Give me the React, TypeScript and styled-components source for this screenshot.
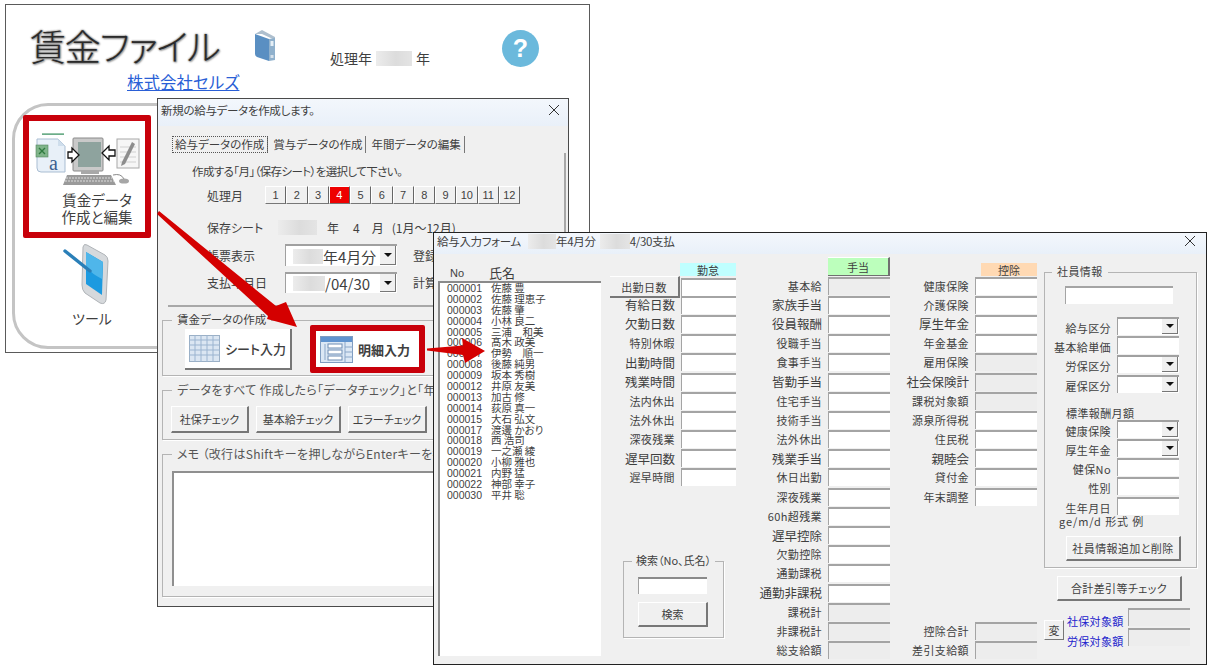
import styled, { createGlobalStyle } from "styled-components";

interface FieldRow {
  label: string;
  big?: boolean;
  readOnly?: boolean;
}

const JP_FONT = `"Noto Sans CJK JP", "Liberation Sans", sans-serif`;

const months = ["1", "2", "3", "4", "5", "6", "7", "8", "9", "10", "11", "12"];

const employees = [
  ["000001", "佐藤 豊"],
  ["000002", "佐藤 理恵子"],
  ["000003", "佐藤 肇"],
  ["000004", "小林 良二"],
  ["000005", "三浦　和美"],
  ["000006", "髙木 政美"],
  ["000007", "伊勢　順一"],
  ["000008", "後藤 純男"],
  ["000009", "坂本 秀樹"],
  ["000012", "井原 友美"],
  ["000013", "加古 修"],
  ["000014", "荻原 真一"],
  ["000015", "大石 弘文"],
  ["000017", "渡邊 かおり"],
  ["000018", "西 浩司"],
  ["000019", "一之瀬 綾"],
  ["000020", "小柳 雅也"],
  ["000021", "内野 猛"],
  ["000022", "神部 幸子"],
  ["000030", "平井 聡"],
];

const attendanceRows: FieldRow[] = [
  { label: "有給日数", big: true },
  { label: "欠勤日数", big: true },
  { label: "特別休暇" },
  { label: "出勤時間", big: true },
  { label: "残業時間", big: true },
  { label: "法内休出" },
  { label: "法外休出" },
  { label: "深夜残業" },
  { label: "遅早回数", big: true },
  { label: "遅早時間" },
];

const allowanceRows: FieldRow[] = [
  { label: "基本給", readOnly: true },
  { label: "家族手当", big: true },
  { label: "役員報酬", big: true },
  { label: "役職手当" },
  { label: "食事手当" },
  { label: "皆勤手当", big: true },
  { label: "住宅手当" },
  { label: "技術手当" },
  { label: "法外休出" },
  { label: "残業手当", big: true },
  { label: "休日出勤" },
  { label: "深夜残業" },
  { label: "60h超残業" },
  { label: "遅早控除", big: true },
  { label: "欠勤控除" },
  { label: "通勤課税" },
  { label: "通勤非課税", big: true },
  { label: "課税計", readOnly: true },
  { label: "非課税計", readOnly: true },
  { label: "総支給額", readOnly: true },
];

const deductionRows: FieldRow[] = [
  { label: "健康保険" },
  { label: "介護保険" },
  { label: "厚生年金", big: true },
  { label: "年金基金" },
  { label: "雇用保険", readOnly: true },
  { label: "社会保険計", big: true, readOnly: true },
  { label: "課税対象額", readOnly: true },
  { label: "源泉所得税" },
  { label: "住民税" },
  { label: "親睦会", big: true },
  { label: "貸付金" },
  { label: "年末調整" },
];

const deductionTotals: FieldRow[] = [
  { label: "控除合計", readOnly: true },
  { label: "差引支給額", readOnly: true },
];

const GlobalStyle = createGlobalStyle`
  html, body {
    margin: 0;
    background: #ffffff;
  }

  body {
    font-family: ${JP_FONT};
    font-feature-settings: "palt";
    color: #3f3f3f;
  }
`;

const Desktop = styled.div`
  position: relative;
  width: 1211px;
  height: 672px;
  overflow: hidden;
`;

const MainWindow = styled.section`
  position: absolute;
  left: 5px;
  top: 4px;
  width: 585px;
  height: 349px;
  box-sizing: border-box;
  background: #ffffff;
  border: 1px solid #5a5a5a;
`;

const MainHeader = styled.header`
  display: flex;
  align-items: flex-start;
  padding: 16px 0 0 24px;
  height: 51px;
`;

const AppTitle = styled.h1`
  margin: 0;
  width: 224px;
  font-size: 36px;
  line-height: 48px;
  font-weight: 300;
  letter-spacing: -1.2px;
  color: #2a2a2a;
  text-shadow: 0 0 2px #8a8a8a, 0 0 2px #8a8a8a, 1px 1px 2px #9a9a9a;
`;

const BookMark = styled.div`
  flex: none;
  margin-top: 9px;
`;

const YearLabel = styled.div`
  display: flex;
  align-items: center;
  gap: 4px;
  margin: 27px 0 0 54px;
  width: 172px;
  font-size: 14px;
  line-height: 20px;
  height: 20px;
`;

const HelpBadge = styled.div`
  display: flex;
  align-items: center;
  justify-content: center;
  width: 37px;
  height: 37px;
  margin-top: 9px;
  border-radius: 50%;
  background: #6bb9dc;
  color: #ffffff;
  font: 700 25px "Liberation Sans", sans-serif;
`;

const CompanyLink = styled.a`
  display: block;
  width: 114px;
  margin: 0 0 0 121px;
  height: 31px;
  font-size: 16.5px;
  line-height: 20px;
  white-space: nowrap;
  color: #2a5fd6;
  text-decoration: underline;
`;

const MenuPanel = styled.div`
  width: 300px;
  height: 246px;
  margin-left: 6px;
  box-sizing: border-box;
  border: 3px solid #c4c4c4;
  border-radius: 36px;
  padding: 9px 0 0 8px;
`;

const MenuHighlight = styled.div`
  display: flex;
  flex-direction: column;
  align-items: center;
  box-sizing: border-box;
  width: 128px;
  height: 123px;
  border: 6px solid #c8000a;
  border-radius: 2px;
  padding-top: 5px;
  font-size: 14.5px;
  line-height: 17px;
  text-align: center;
`;

const MenuCaption = styled.span`
  margin: 3px 0 0 20px;
`;

const MenuTool = styled.div`
  display: flex;
  flex-direction: column;
  align-items: center;
  width: 128px;
  margin-top: 5px;
  font-size: 14px;
  line-height: 18px;
  gap: 4px;
`;

const MenuToolCaption = styled.span`
  margin-left: 10px;
`;

const Redacted = styled.span<{ $width: number; $left?: number }>`
  display: inline-block;
  flex: none;
  width: ${(p) => p.$width}px;
  height: 15px;
  margin-left: ${(p) => p.$left ?? 0}px;
  background: linear-gradient(90deg, #ececec, #dcdcdc 55%, #e4e4e4);
`;

const SetupDialog = styled.section`
  position: absolute;
  left: 157px;
  top: 98px;
  width: 412px;
  height: 509px;
  box-sizing: border-box;
  background: #f0f0f0;
  border: 1px solid #4a4a4a;
  font-size: 12px;
`;

const TitleBar = styled.div<{ $height: number; $closeGap: number }>`
  display: flex;
  align-items: center;
  height: ${(p) => p.$height}px;
  box-sizing: border-box;
  padding: 0 ${(p) => p.$closeGap}px 5px 3px;
  background: linear-gradient(#f3f7fc, #e9f0f9);
  white-space: nowrap;
  font-size: 11.5px;
  letter-spacing: -0.3px;
`;

const CloseGlyph = styled.svg`
  margin-left: auto;
  flex: none;
`;

const TabStrip = styled.div`
  display: flex;
  margin: 10px 0 0 14px;
  height: 17px;
  font-size: 11.5px;
  line-height: 16px;
`;

const Tab = styled.div<{ $active?: boolean }>`
  padding: 0 3px 0 3px;
  margin-right: 2px;
  box-sizing: border-box;
  border-right: 1px solid #777777;
  white-space: nowrap;
  outline: ${(p) => (p.$active ? "1px dotted #555555" : "none")};
  outline-offset: -1px;
`;

const TabPanel = styled.div`
  width: 398px;
  height: 154px;
  margin-left: 10px;
  box-sizing: border-box;
  border-right: 2px solid #a8a8a8;
  border-bottom: 2px solid #a8a8a8;
  padding: 10px 0 0 24px;
`;

const PanelNote = styled.div`
  font-size: 11.5px;
  letter-spacing: -0.6px;
  line-height: 16px;
  white-space: nowrap;
`;

const PanelRow = styled.div<{ $gapTop: number }>`
  display: flex;
  align-items: center;
  margin: ${(p) => p.$gapTop}px 0 0 15px;
  white-space: nowrap;
`;

const RowLabel = styled.span`
  flex: none;
  width: 78px;
`;

const MonthButtons = styled.div`
  display: flex;
  margin-left: -20px;
`;

const MonthButton = styled.div<{ $selected?: boolean }>`
  width: 21.25px;
  height: 18px;
  box-sizing: border-box;
  border-top: 1px solid #ffffff;
  border-left: 1px solid #ffffff;
  border-right: 1px solid #666666;
  border-bottom: 1px solid #777777;
  background: ${(p) => (p.$selected ? "#ee0000" : "#f0f0f0")};
  color: ${(p) => (p.$selected ? "#ffffff" : "#3f3f3f")};
  font: 11px/16px "Liberation Sans", sans-serif;
  text-align: center;
`;

const SheetValue = styled.span<{ $left: number }>`
  margin-left: ${(p) => p.$left}px;
`;

const ComboBox = styled.div<{ $width: number; $height: number }>`
  display: flex;
  align-items: center;
  flex: none;
  width: ${(p) => p.$width}px;
  height: ${(p) => p.$height}px;
  box-sizing: border-box;
  background: #ffffff;
  border-top: 2px solid #a0a0a0;
  border-left: 1px solid #a0a0a0;
  font-size: 15px;
`;

const ComboText = styled.span`
  display: flex;
  align-items: center;
  flex: 1;
  min-width: 0;
  padding-left: 7px;
`;

const ComboArrow = styled.span`
  display: flex;
  align-items: center;
  justify-content: center;
  flex: none;
  align-self: stretch;
  width: 16px;
  margin: 0 1px 1px 0;
  box-sizing: border-box;
  background: #f0f0f0;
  border-right: 1px solid #777777;
  border-bottom: 1px solid #777777;

  &::before {
    content: "";
    border-left: 4px solid transparent;
    border-right: 4px solid transparent;
    border-top: 4px solid #111111;
  }
`;

const CutOffLabel = styled.span`
  margin-left: 16px;
`;

const Group = styled.fieldset`
  margin: 0;
  padding: 0;
  min-width: 0;
  box-sizing: border-box;
  border: 1px solid #b4b4b4;
  box-shadow: 1px 1px 0 #ffffff;
`;

const GroupTitle = styled.legend`
  margin-left: 9px;
  padding: 0 5px;
  height: 14px;
  font-size: 11.5px;
  line-height: 13px;
  white-space: nowrap;
`;

const WideGroupTitle = styled(GroupTitle)`
  font-size: 12px;
  letter-spacing: 0.3px;
  color: #555555;
`;

const DialogGroup = styled(Group)<{ $top: number; $height: number }>`
  display: block;
  width: 402px;
  height: ${(p) => p.$height}px;
  margin: ${(p) => p.$top}px 0 0 4px;
`;

const EntryButtons = styled.div`
  display: flex;
  align-items: center;
  margin-top: -2px;
  padding-left: 22px;
  gap: 18px;
`;

const EntryButton = styled.div`
  display: flex;
  align-items: center;
  justify-content: center;
  gap: 5px;
  width: 107px;
  height: 41px;
  box-sizing: border-box;
  background: #ffffff;
  border-right: 2px solid #777777;
  border-bottom: 2px solid #777777;
  font-size: 13px;
  font-weight: 500;
  white-space: nowrap;
`;

const EntryFrame = styled.div`
  display: flex;
  align-items: center;
  gap: 5px;
  width: 115px;
  height: 48px;
  padding-left: 4px;
  box-sizing: border-box;
  background: #ffffff;
  border: 6px solid #c8000a;
  border-radius: 2px;
  font-size: 13px;
  font-weight: 700;
  white-space: nowrap;
`;

const CheckButtons = styled.div`
  display: flex;
  gap: 7px;
  padding: 9px 0 0 8px;
`;

const CheckButton = styled.div<{ $width: number }>`
  display: flex;
  align-items: center;
  justify-content: center;
  width: ${(p) => p.$width}px;
  height: 27px;
  box-sizing: border-box;
  border-top: 1px solid #ffffff;
  border-left: 1px solid #ffffff;
  border-right: 2px solid #777777;
  border-bottom: 2px solid #777777;
  font-size: 11px;
  white-space: nowrap;
`;

const MemoArea = styled.div`
  width: 300px;
  height: 115px;
  margin: 10px 0 0 9px;
  box-sizing: border-box;
  background: #ffffff;
  border-top: 2px solid #8f8f8f;
  border-left: 2px solid #8f8f8f;
`;

const FormWindow = styled.section`
  position: absolute;
  left: 433px;
  top: 232px;
  width: 774px;
  height: 433px;
  box-sizing: border-box;
  background: #f0f0f0;
  border: 1px solid #222222;
  font-size: 11px;
`;

const FormBody = styled.div`
  display: flex;
  align-items: flex-start;
`;

const ListColumn = styled.div`
  flex: none;
  width: 176px;
  padding-left: 4px;
  box-sizing: border-box;
`;

const ListHeading = styled.div`
  display: flex;
  align-items: flex-end;
  height: 27px;
  padding-left: 12px;
  font-size: 13px;
  line-height: 16px;
`;

const ListNoHeading = styled.span`
  width: 39px;
  font: 11px/15px "Liberation Sans", sans-serif;
`;

const ListBox = styled.div`
  width: 163px;
  height: 375px;
  box-sizing: border-box;
  background: #ffffff;
  border-top: 2px solid #8a8a8a;
  border-left: 2px solid #8a8a8a;
  padding: 0 0 0 7px;
`;

const ListRow = styled.div`
  display: flex;
  height: 10.9px;
  line-height: 10.9px;
  font-size: 10.5px;
  white-space: nowrap;
`;

const ListNumber = styled.span`
  width: 44px;
  font: 10.5px/10.9px "Liberation Sans", sans-serif;
`;

const FieldColumn = styled.div<{ $width: number; $gapLeft?: number }>`
  flex: none;
  display: flex;
  flex-direction: column;
  width: ${(p) => p.$width}px;
  margin-left: ${(p) => p.$gapLeft ?? 0}px;
`;

const ColumnHeading = styled.div`
  display: flex;
  align-items: flex-end;
  justify-content: flex-end;
  height: 22px;
`;

const ColumnTag = styled.div<{ $color: string }>`
  display: flex;
  align-items: center;
  justify-content: center;
  width: 56px;
  height: 13px;
  background: ${(p) => p.$color};
  font-size: 11px;
`;

const ColumnRaisedTag = styled.div`
  display: flex;
  align-items: center;
  justify-content: center;
  width: 62px;
  height: 19px;
  box-sizing: border-box;
  background: #bcffbc;
  border-right: 2px solid #707070;
  border-bottom: 1px solid #707070;
  border-top: 1px solid #ffffff;
  font-size: 11px;
`;

const Row = styled.div<{ $inputWidth: number }>`
  display: grid;
  grid-template-columns: 1fr ${(p) => p.$inputWidth}px;
  column-gap: 6px;
  align-items: center;
  height: 19.2px;
`;

const RowText = styled.span<{ $big?: boolean }>`
  justify-self: end;
  white-space: nowrap;
  font-size: ${(p) => (p.$big ? "12.5px" : "11px")};
  letter-spacing: ${(p) => (p.$big ? "0" : "0.4px")};
`;

const FieldBox = styled.div<{ $readOnly?: boolean }>`
  height: 18px;
  box-sizing: border-box;
  background: ${(p) => (p.$readOnly ? "#ededed" : "#ffffff")};
  border-top: 2px solid #a4a4a4;
  border-left: 1px solid #a4a4a4;
`;

const RaisedLabel = styled.div`
  display: flex;
  align-items: center;
  justify-content: center;
  height: 22px;
  margin-right: 1px;
  box-sizing: border-box;
  border-right: 2px solid #777777;
  border-bottom: 2px solid #777777;
  border-top: 1px solid #ffffff;
  font-size: 11px;
  letter-spacing: 0.4px;
`;

const AttendanceButtonRow = styled(Row)`
  grid-template-columns: 1fr 55px;
  column-gap: 0;
  height: 19.2px;
`;

const SearchGroup = styled(Group)`
  width: 101px;
  height: 84px;
  margin: 67px 0 0 13px;
`;

const SearchTitle = styled(GroupTitle)`
  margin-left: 8px;
  padding: 0 4px;
  font-size: 11px;
`;

const SearchInput = styled.div`
  width: 69px;
  height: 17px;
  margin: 9px 0 0 14px;
  box-sizing: border-box;
  background: #ffffff;
  border-top: 2px solid #8a8a8a;
  border-left: 1px solid #a0a0a0;
`;

const SearchButton = styled.div`
  display: flex;
  align-items: center;
  justify-content: center;
  width: 70px;
  height: 25px;
  margin: 8px 0 0 14px;
  box-sizing: border-box;
  border-top: 1px solid #ffffff;
  border-left: 1px solid #ffffff;
  border-right: 2px solid #777777;
  border-bottom: 2px solid #777777;
`;

const SpacerRows = styled.div<{ $count: number }>`
  height: ${(p) => p.$count * 19.2}px;
`;

const InfoColumn = styled.div`
  flex: none;
  width: 153px;
  margin: 11px 0 0 7px;
`;

const InfoGroup = styled(Group)`
  height: 303px;
`;

const InfoTitle = styled(GroupTitle)`
  margin-left: 7px;
  font-size: 11px;
  letter-spacing: 0.4px;
`;

const InfoNameInput = styled(FieldBox)`
  width: 108px;
  margin: 7px 0 12px 20px;
`;

const InfoRow = styled.div`
  display: grid;
  grid-template-columns: 66px 62px;
  column-gap: 6px;
  align-items: center;
  height: 19.2px;
`;

const InfoRowText = styled(RowText)`
  padding-top: 4px;
`;

const InfoSubTitle = styled.div`
  margin: 12px 0 0 21px;
  height: 14px;
  font-size: 11px;
  line-height: 16px;
  letter-spacing: 0.4px;
  white-space: nowrap;
`;

const InfoHint = styled.div`
  margin: 0 0 0 14px;
  font-size: 11px;
  line-height: 13px;
  letter-spacing: 0.9px;
  white-space: nowrap;
`;

const InfoButton = styled.div`
  display: flex;
  align-items: center;
  justify-content: center;
  width: 115px;
  height: 25px;
  margin: 8px 0 0 21px;
  box-sizing: border-box;
  border-top: 1px solid #ffffff;
  border-left: 1px solid #ffffff;
  border-right: 2px solid #777777;
  border-bottom: 2px solid #777777;
  letter-spacing: 0.4px;
  white-space: nowrap;
`;

const TotalsButton = styled(InfoButton)`
  width: 125px;
  margin: 8px 0 0 13px;
`;

const TotalsRow = styled.div`
  display: flex;
  align-items: flex-start;
  margin: 7px 0 0 0;
`;

const SwapButton = styled.div`
  display: flex;
  align-items: center;
  justify-content: center;
  flex: none;
  width: 20px;
  height: 20px;
  margin: 12px 3px 0 0;
  box-sizing: border-box;
  border-right: 1px solid #777777;
  border-bottom: 1px solid #777777;
  border-top: 1px solid #ffffff;
  border-left: 1px solid #ffffff;
`;

const TotalsGrid = styled.div`
  display: grid;
  grid-template-columns: 61px 62px;
  row-gap: 2px;
  align-items: start;
`;

const TotalsLabel = styled.span`
  height: 18px;
  color: #2222cc;
  font-size: 11px;
  line-height: 26px;
  letter-spacing: 0.3px;
  white-space: nowrap;
`;

const ArrowLayer = styled.svg`
  position: absolute;
  inset: 0;
  pointer-events: none;
`;

const CloseIcon = () => (
  <CloseGlyph width="12" height="12" viewBox="0 0 12 12">
    <path d="M1 1 L11 11 M11 1 L1 11" stroke="#333" strokeWidth="1" fill="none" />
  </CloseGlyph>
);

const BookIcon = () => (
  <svg width="22" height="31" viewBox="0 0 22 31">
    <path d="M1 4 L8 0 L21 7 L21 10 L8 4 Z" fill="#aebfce" />
    <path d="M1 4 L15 9 L15 31 L3 27 Q1 26 1 24 Z" fill="#5a8fc2" />
    <path d="M15 9 L21 8 L21 30 L15 31 Z" fill="#8fb0cc" />
    <rect x="16.5" y="11" width="3" height="5" fill="#e6eff6" />
    <rect x="16.5" y="25" width="3" height="3" fill="#d5e0ea" />
  </svg>
);

const ComputerIcon = () => (
  <svg width="116" height="62" viewBox="0 0 116 62">
    <rect x="13" y="7.5" width="22" height="1.2" fill="#2e8b57" />
    <path d="M8 13 H29 L36 20 V46 H12 Q8 46 8 42 Z" fill="#e8f0f8" stroke="#a9bdd2" />
    <path d="M29 13 V20 H36 Z" fill="#cfdeec" />
    <rect x="7" y="19" width="12" height="12" fill="#7fb489" stroke="#55885f" strokeWidth="0.6" />
    <path d="M10 22 L16 28 M16 22 L10 28" stroke="#2f7a3f" strokeWidth="1.4" />
    <text x="20" y="44" fontFamily="Liberation Serif, serif" fontSize="20" fill="#3b5f8f">
      a
    </text>
    <rect x="44" y="12" width="30" height="33" rx="1" fill="#c9c9c9" stroke="#8a8a8a" />
    <rect x="49" y="16" width="23" height="25" fill="#8ea39e" />
    <rect x="52" y="45" width="18" height="3" fill="#a8a8a8" />
    <path d="M38 49 H82 L87 59 H34 Z" fill="#9a9a9a" />
    <path d="M37 52 H83 M36 55 H85" stroke="#dcdcdc" strokeWidth="1" strokeDasharray="2 1" />
    <path d="M84 49 Q92 47 95 53" stroke="#8a8a8a" fill="none" />
    <ellipse cx="95" cy="55" rx="5" ry="2.6" fill="#a6a6a6" />
    <path d="M39 26 H43 V22 L50 29 L43 36 V32 H39 Z" fill="#fff" stroke="#111" strokeWidth="1.3" />
    <path d="M86 24 H80 V20 L73 27 L80 34 V30 H86 Z" fill="#fff" stroke="#111" strokeWidth="1.3" />
    <rect x="88" y="13" width="22" height="29" fill="#f6f6f6" stroke="#a8a8a8" />
    <path d="M91 21 H107 M91 26 H107 M91 31 H107 M91 36 H107" stroke="#d0d0d0" />
    <path d="M93 36 L103 16 L106 18 L96 38 L92 40 Z" fill="#8d8d8d" />
  </svg>
);

const TabletIcon = () => (
  <svg width="48" height="62" viewBox="0 0 48 62">
    <path d="M24 2 Q21 0 20 4 L19 42 Q19 47 22 50 L37 60 Q42 62 43 57 L45 18 Q45 14 42 12 Z" fill="#d6d9dc" stroke="#b0b4b8" />
    <path d="M23 9 L40 19 L39 52 L23 41 Z" fill="#1c9ae0" />
    <path d="M23 9 L40 19 L39 36 Q29 31 23 24 Z" fill="#4fb6ea" />
    <path d="M2 8 L27 28" stroke="#2a7fb8" strokeWidth="3.4" strokeLinecap="round" />
  </svg>
);

const SheetIcon = () => (
  <svg width="31" height="27" viewBox="0 0 31 27">
    <rect x="0.5" y="0.5" width="30" height="26" fill="#dbe6f2" stroke="#9bb0c6" />
    <path d="M0 5 H31 M0 10 H31 M0 15 H31 M0 20 H31 M6 0 V27 M12 0 V27 M18 0 V27 M24 0 V27" stroke="#9bb4d0" />
  </svg>
);

const DetailIcon = () => (
  <svg width="33" height="27" viewBox="0 0 33 27">
    <rect x="0.5" y="0.5" width="32" height="26" fill="#dce8f5" stroke="#7f9cc0" />
    <rect x="1" y="1" width="31" height="5" fill="#5f93cf" />
    <rect x="8" y="8" width="14" height="4" fill="#fff" stroke="#6d8cb3" />
    <rect x="8" y="14" width="14" height="4" fill="#fff" stroke="#6d8cb3" />
    <rect x="8" y="20" width="14" height="4" fill="#fff" stroke="#6d8cb3" />
    <path d="M5 8 V24 M25 6 V27 M25 11 H33 M25 16 H33 M25 21 H33" stroke="#8aa6c8" />
  </svg>
);

const renderRows = (rows: FieldRow[], inputWidth: number) =>
  rows.map((row) => (
    <Row key={row.label} $inputWidth={inputWidth}>
      <RowText $big={row.big}>{row.label}</RowText>
      <FieldBox $readOnly={row.readOnly} />
    </Row>
  ));

const InfoCombo = ({ label }: { label: string }) => (
  <InfoRow>
    <InfoRowText>{label}</InfoRowText>
    <ComboBox $width={62} $height={18}>
      <ComboText />
      <ComboArrow />
    </ComboBox>
  </InfoRow>
);

const InfoField = ({ label }: { label: string }) => (
  <InfoRow>
    <InfoRowText>{label}</InfoRowText>
    <FieldBox />
  </InfoRow>
);

export default function App() {
  return (
    <Desktop>
      <GlobalStyle />

      <MainWindow>
        <MainHeader>
          <AppTitle>賃金ファイル</AppTitle>
          <BookMark>
            <BookIcon />
          </BookMark>
          <YearLabel>
            処理年 <Redacted $width={36} /> 年
          </YearLabel>
          <HelpBadge>?</HelpBadge>
        </MainHeader>
        <CompanyLink>株式会社セルズ</CompanyLink>
        <MenuPanel>
          <MenuHighlight>
            <ComputerIcon />
            <MenuCaption>
              賃金データ
              <br />
              作成と編集
            </MenuCaption>
          </MenuHighlight>
          <MenuTool>
            <TabletIcon />
            <MenuToolCaption>ツール</MenuToolCaption>
          </MenuTool>
        </MenuPanel>
      </MainWindow>

      <SetupDialog>
        <TitleBar $height={27} $closeGap={8}>
          新規の給与データを作成します。
          <CloseIcon />
        </TitleBar>
        <TabStrip>
          <Tab $active>給与データの作成</Tab>
          <Tab>賞与データの作成</Tab>
          <Tab>年間データの編集</Tab>
        </TabStrip>
        <TabPanel>
          <PanelNote>作成する「月」（保存シート）を選択して下さい。</PanelNote>
          <PanelRow $gapTop={7}>
            <RowLabel>処理月</RowLabel>
            <MonthButtons>
              {months.map((month) => (
                <MonthButton key={month} $selected={month === "4"}>
                  {month}
                </MonthButton>
              ))}
            </MonthButtons>
          </PanelRow>
          <PanelRow $gapTop={15}>
            <RowLabel>保存シート</RowLabel>
            <Redacted $width={39} $left={-7} />
            <SheetValue $left={10}>年</SheetValue>
            <SheetValue $left={14}>4</SheetValue>
            <SheetValue $left={12}>月</SheetValue>
            <SheetValue $left={8}>(1月～12月)</SheetValue>
          </PanelRow>
          <PanelRow $gapTop={8}>
            <RowLabel>帳票表示</RowLabel>
            <ComboBox $width={112} $height={22}>
              <ComboText>
                <Redacted $width={30} />
                年4月分
              </ComboText>
              <ComboArrow />
            </ComboBox>
            <CutOffLabel>登録</CutOffLabel>
          </PanelRow>
          <PanelRow $gapTop={6}>
            <RowLabel>支払年月日</RowLabel>
            <ComboBox $width={112} $height={21}>
              <ComboText>
                <Redacted $width={32} />
                /04/30
              </ComboText>
              <ComboArrow />
            </ComboBox>
            <CutOffLabel>計算</CutOffLabel>
          </PanelRow>
        </TabPanel>

        <DialogGroup $top={6} $height={63}>
          <GroupTitle>賃金データの作成</GroupTitle>
          <EntryButtons>
            <EntryButton>
              <SheetIcon />
              シート入力
            </EntryButton>
            <EntryFrame>
              <DetailIcon />
              明細入力
            </EntryFrame>
          </EntryButtons>
        </DialogGroup>

        <DialogGroup $top={7} $height={57}>
          <WideGroupTitle>データをすべて 作成したら「データチェック」と「年間データの更新」を実行</WideGroupTitle>
          <CheckButtons>
            <CheckButton $width={78}>社保チェック</CheckButton>
            <CheckButton $width={85}>基本給チェック</CheckButton>
            <CheckButton $width={79}>エラーチェック</CheckButton>
          </CheckButtons>
        </DialogGroup>

        <DialogGroup $top={7} $height={150}>
          <WideGroupTitle>メモ （改行はShiftキーを押しながらEnterキーを押下(ください)</WideGroupTitle>
          <MemoArea />
        </DialogGroup>
      </SetupDialog>

      <FormWindow>
        <TitleBar $height={21} $closeGap={10}>
          給与入力フォーム
          <Redacted $width={28} $left={7} />
          年4月分
          <Redacted $width={30} $left={4} />
          4/30支払
          <CloseIcon />
        </TitleBar>
        <FormBody>
          <ListColumn>
            <ListHeading>
              <ListNoHeading>No</ListNoHeading>
              氏名
            </ListHeading>
            <ListBox>
              {employees.map(([no, name]) => (
                <ListRow key={no}>
                  <ListNumber>{no}</ListNumber>
                  {name}
                </ListRow>
              ))}
            </ListBox>
          </ListColumn>

          <FieldColumn $width={126}>
            <ColumnHeading>
              <ColumnTag $color="#bfffff">勤怠</ColumnTag>
            </ColumnHeading>
            <AttendanceButtonRow $inputWidth={55}>
              <RaisedLabel>出勤日数</RaisedLabel>
              <FieldBox />
            </AttendanceButtonRow>
            {renderRows(attendanceRows, 55)}
            <SearchGroup>
              <SearchTitle>検索（No、氏名）</SearchTitle>
              <SearchInput />
              <SearchButton>検索</SearchButton>
            </SearchGroup>
          </FieldColumn>

          <FieldColumn $width={150} $gapLeft={4}>
            <ColumnHeading>
              <ColumnRaisedTag>手当</ColumnRaisedTag>
            </ColumnHeading>
            {renderRows(allowanceRows, 62)}
          </FieldColumn>

          <FieldColumn $width={142} $gapLeft={5}>
            <ColumnHeading>
              <ColumnTag $color="#ffd9b3">控除</ColumnTag>
            </ColumnHeading>
            {renderRows(deductionRows, 62)}
            <SpacerRows $count={6} />
            {renderRows(deductionTotals, 62)}
          </FieldColumn>

          <InfoColumn>
            <InfoGroup>
              <InfoTitle>社員情報</InfoTitle>
              <InfoNameInput />
              <InfoCombo label="給与区分" />
              <InfoField label="基本給単価" />
              <InfoCombo label="労保区分" />
              <InfoCombo label="雇保区分" />
              <InfoSubTitle>標準報酬月額</InfoSubTitle>
              <InfoCombo label="健康保険" />
              <InfoCombo label="厚生年金" />
              <InfoField label="健保No" />
              <InfoField label="性別" />
              <InfoField label="生年月日" />
              <InfoHint>ge/m/d 形式 例</InfoHint>
              <InfoButton>社員情報追加と削除</InfoButton>
            </InfoGroup>
            <TotalsButton>合計差引等チェック</TotalsButton>
            <TotalsRow>
              <SwapButton>変</SwapButton>
              <TotalsGrid>
                <TotalsLabel>社保対象額</TotalsLabel>
                <FieldBox $readOnly />
                <TotalsLabel>労保対象額</TotalsLabel>
                <FieldBox $readOnly />
              </TotalsGrid>
            </TotalsRow>
          </InfoColumn>
        </FormBody>
      </FormWindow>

      <ArrowLayer width="1211" height="672" viewBox="0 0 1211 672">
        <polygon
          points="157,214 159,211 276,306 286,302 297,327 267,319 268,316"
          fill="#d40000"
        />
        <polygon
          points="427,348.5 463,345.5 462,338 485,351 465,363 463,355 427,350.5"
          fill="#d40000"
        />
      </ArrowLayer>
    </Desktop>
  );
}
